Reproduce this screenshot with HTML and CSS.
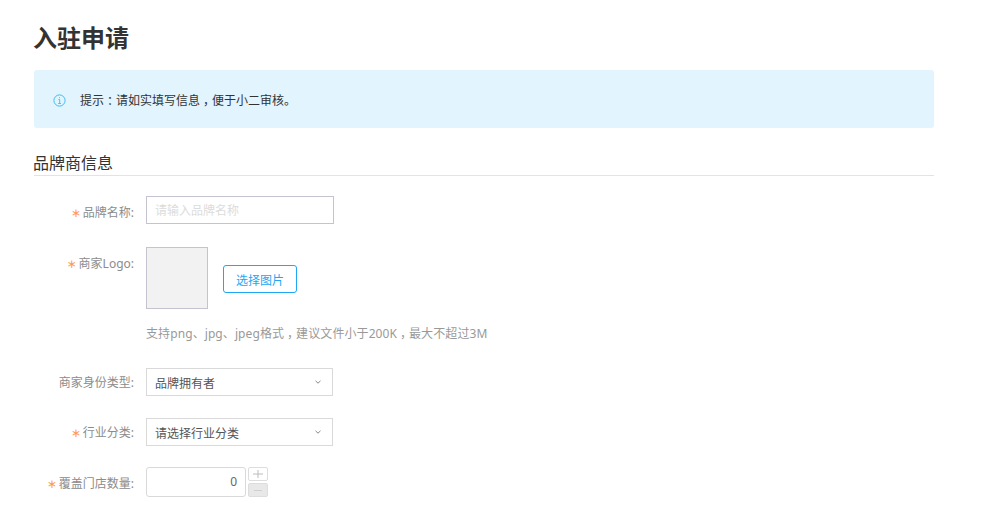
FILE: index.html
```html
<!DOCTYPE html>
<html lang="zh-CN">
<head>
<meta charset="utf-8">
<title>入驻申请</title>
<link rel="stylesheet" href="styles.css">
</head>
<body>
<main class="page">
  <h1 class="title">入驻申请</h1>
  <div class="notice">
    <svg class="notice-icon" width="13" height="13" viewBox="0 0 13 13" aria-hidden="true">
      <circle cx="6.5" cy="6.5" r="5.6" fill="none" stroke="#35c0f8" stroke-width="1"/>
      <path d="M5.4 5.5H6.7V9.4M5.2 9.5H8M6.5 3.2V4.2" fill="none" stroke="#35c0f8" stroke-width=".9"/>
    </svg>
    <span>提示<span class="mid">：</span>请如实填写信息<span class="mid">，</span>便于小二审核。</span>
  </div>
  <h2 class="section">品牌商信息</h2>
  <form class="form">
    <div class="row">
      <label class="label label-tall"><i class="star">∗</i>品牌名称:</label>
      <input class="text-input" type="text" placeholder="请输入品牌名称">
    </div>
    <div class="row row-logo">
      <label class="label label-tall"><i class="star">∗</i>商家Logo:</label>
      <div class="logo-field">
        <div class="logo-line">
          <div class="logo-box"></div>
          <button class="pick" type="button">选择图片</button>
        </div>
        <p class="hint">支持png、jpg、jpeg格式<span class="mid">，</span>建议文件小于200K<span class="mid">，</span>最大不超过3M</p>
      </div>
    </div>
    <div class="row row-type">
      <label class="label">商家身份类型:</label>
      <div class="select"><span>品牌拥有者</span>
        <svg class="caret" width="6" height="4" viewBox="0 0 6 4" aria-hidden="true"><path d="M.5.8L3 3.2 5.5.8" fill="none" stroke="#888" stroke-width="1"/></svg>
      </div>
    </div>
    <div class="row row-cat">
      <label class="label"><i class="star">∗</i>行业分类:</label>
      <div class="select"><span>请选择行业分类</span>
        <svg class="caret" width="6" height="4" viewBox="0 0 6 4" aria-hidden="true"><path d="M.5.8L3 3.2 5.5.8" fill="none" stroke="#888" stroke-width="1"/></svg>
      </div>
    </div>
    <div class="row row-num">
      <label class="label label-tall"><i class="star">∗</i>覆盖门店数量:</label>
      <div class="number">
        <div class="num-value">0</div>
        <div class="steppers">
          <span class="step"><svg width="10" height="10" viewBox="0 0 10 10" aria-hidden="true"><path d="M0 5H10M5 1V9" stroke="#bcbcbc" stroke-width="1" fill="none"/></svg></span>
          <span class="step step-off"><svg width="10" height="10" viewBox="0 0 10 10" aria-hidden="true"><path d="M1 5.5H9" stroke="#cfcfcf" stroke-width="1" fill="none"/></svg></span>
        </div>
      </div>
    </div>
  </form>
</main>
</body>
</html>
```

FILE: styles.css
```css
* { box-sizing: border-box; }
html, body { margin: 0; padding: 0; }
body {
  background: #fff;
  color: #333;
  font-family: "Noto Sans", "Noto Sans CJK SC", sans-serif;
  font-size: 12px;
  overflow: hidden;
}
.page { width: 934px; height: 511px; padding: 20px 0 0 34px; }
.mid {
  display: inline-block;
  width: 1em;
  text-align: center;
  font-feature-settings: "halt";
}
.title {
  margin: 0;
  height: 36px;
  font-size: 24px;
  line-height: 36px;
  font-weight: 700;
  text-indent: -1px;
  color: #333;
}
.notice {
  margin-top: 14px;
  height: 58px;
  padding: 2px 0 0 19px;
  display: flex;
  align-items: center;
  gap: 14px;
  background: #e2f4fe;
  border-radius: 3px;
  color: #333;
}
.notice-icon { flex: none; }
.section {
  margin: 24px 0 0;
  height: 24px;
  border-bottom: 1px solid #e3e3e3;
  font-size: 16px;
  line-height: 22px;
  font-weight: 400;
  text-indent: -1px;
  color: #333;
}
.form { padding-top: 20px; }
.row { display: flex; align-items: flex-start; }
.label {
  width: 100px;
  flex: none;
  text-align: right;
  color: #8c8c8c;
  line-height: 30px;
}
.label-tall { line-height: 34px; }
.star {
  font-family: "DejaVu Sans", sans-serif;
  font-style: normal;
  color: #ff9a4d;
  margin-right: 2px;
}
.row > :nth-child(2) { margin-left: 12px; }
.text-input {
  width: 188px;
  height: 28px;
  padding: 0 8px;
  border: 1px solid #c4c4d0;
  font: inherit;
  color: #333;
  outline: none;
}
.text-input::placeholder { color: #dcdcdc; opacity: 1; }
.row-logo { margin-top: 17px; }
.logo-line { display: flex; align-items: flex-end; gap: 15px; }
.logo-box {
  width: 62px;
  height: 62px;
  background: #f2f2f2;
  border: 1px solid #c4c4d0;
}
.pick {
  width: 74px;
  height: 28px;
  margin-bottom: 16px;
  padding: 2px 0 0;
  background: #fff;
  border: 1px solid #1ea7f5;
  border-radius: 3px;
  color: #1ea7f5;
  font: inherit;
}
.hint { margin: 16px 0 0; color: #999; line-height: 18px; letter-spacing: .09px; }
.row-type { margin-top: 25px; }
.row-cat { margin-top: 20px; }
.row-num { margin-top: 19px; }
.select {
  width: 187px;
  height: 28px;
  padding: 2px 11px 0 8px;
  display: flex;
  align-items: center;
  justify-content: space-between;
  border: 1px solid #d9d9d9;
  color: #555;
}
.caret { margin-bottom: 2px; }
.number { display: flex; gap: 2px; }
.num-value {
  width: 100px;
  height: 30px;
  padding-right: 8px;
  border: 1px solid #d9d9d9;
  border-radius: 3px;
  text-align: right;
  line-height: 28px;
  color: #666;
}
.steppers { display: flex; flex-direction: column; gap: 2px; }
.step {
  width: 20px;
  height: 14px;
  display: flex;
  align-items: center;
  justify-content: center;
  border: 1px solid #ddd;
  border-radius: 2px;
}
.step-off { background: #e8e8e8; }
```
